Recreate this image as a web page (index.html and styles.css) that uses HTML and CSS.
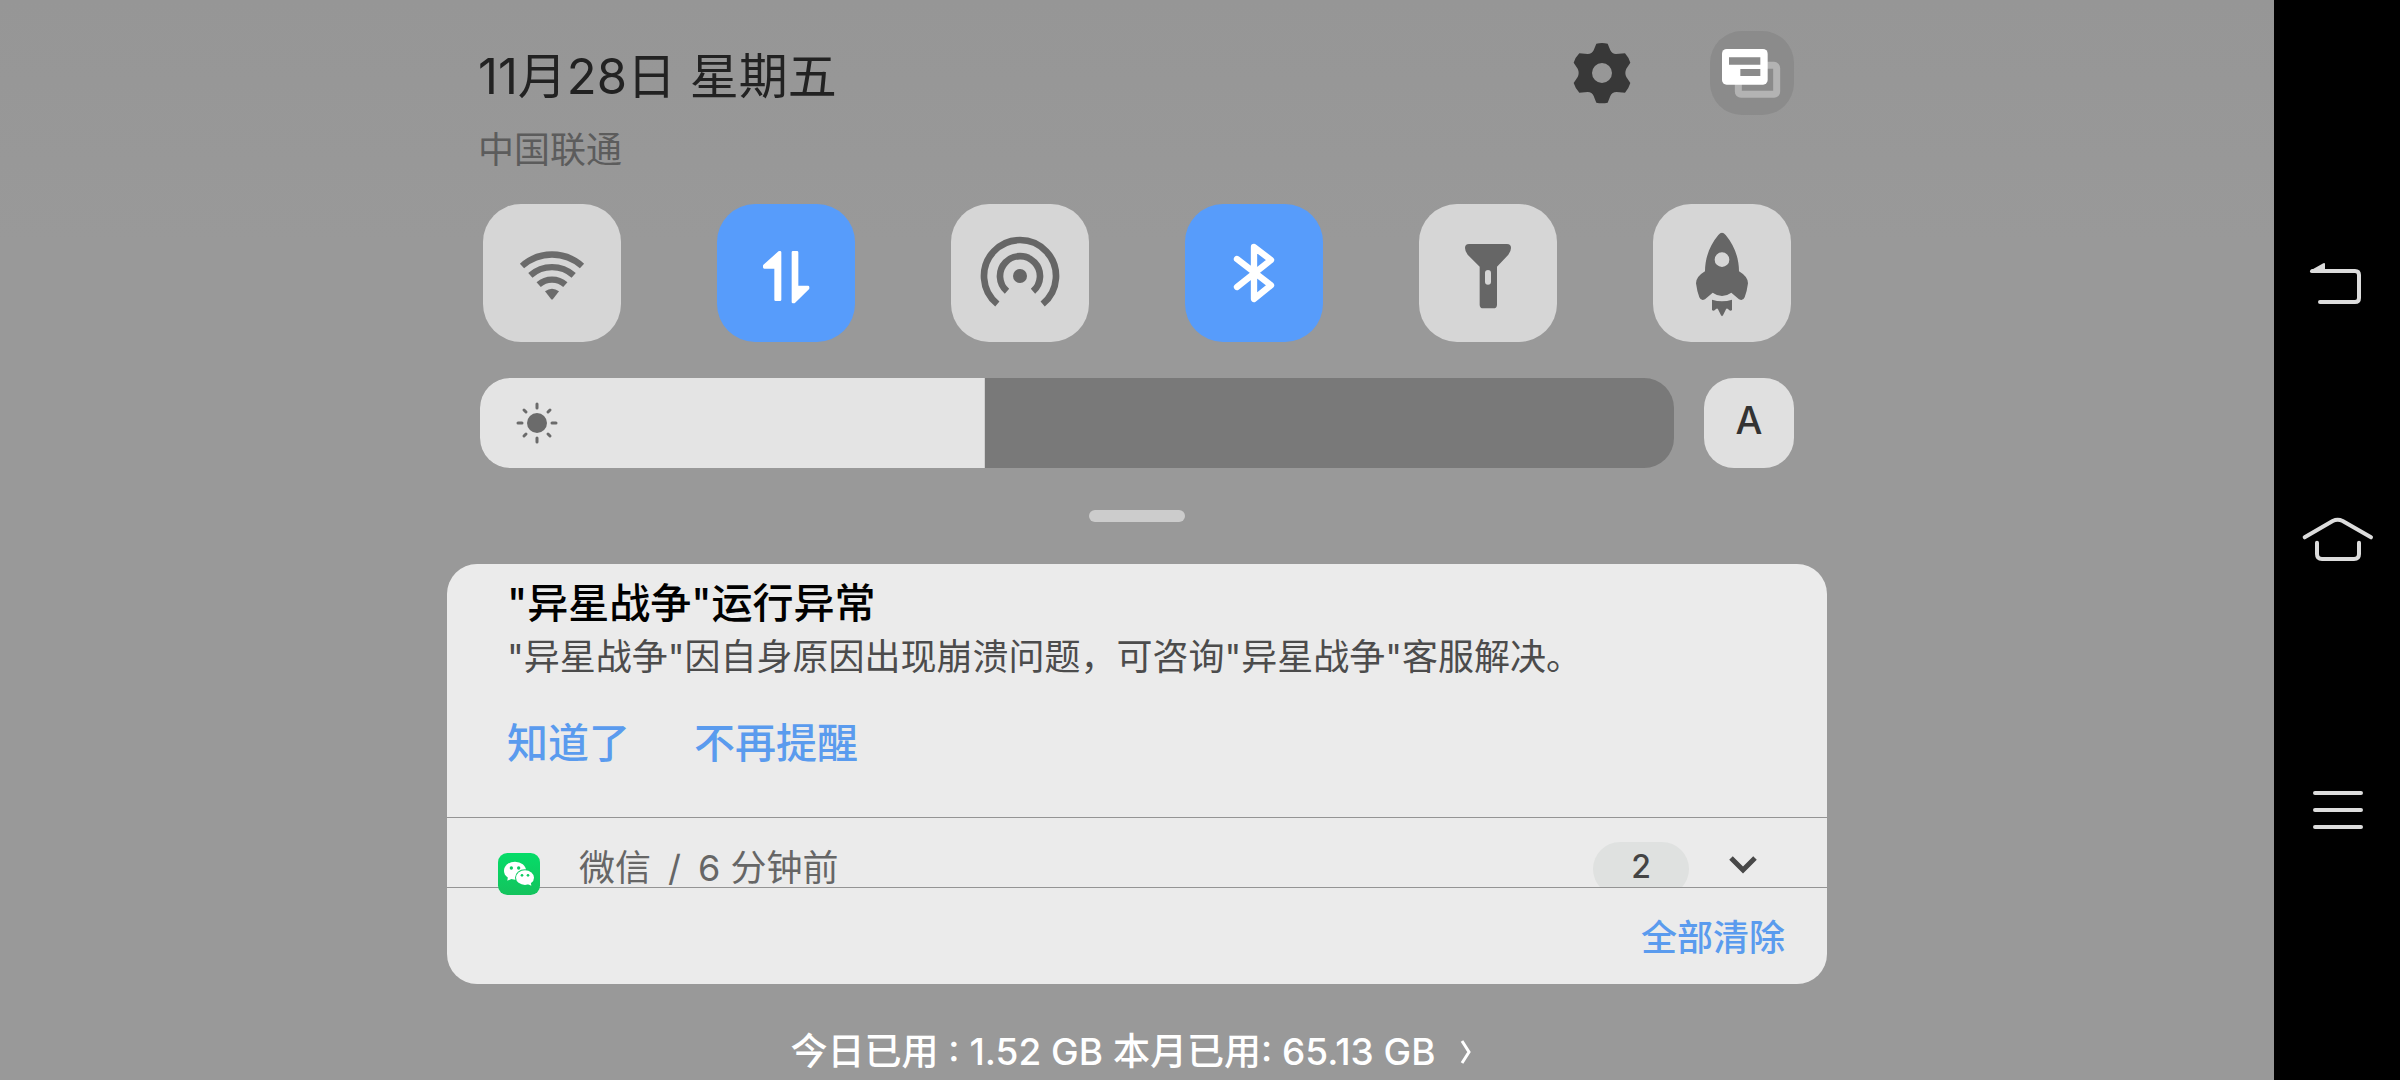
FILE: index.html
```html
<!DOCTYPE html>
<html lang="zh-CN">
<head>
<meta charset="utf-8">
<meta name="viewport" content="width=device-width, initial-scale=1">
<title>通知中心</title>
<link rel="stylesheet" href="styles.css">
</head>
<body>
<div class="screen">
  <main class="shade">
    <section class="quick">
      <header class="header">
        <div class="header-text">
          <h1 class="date">11月28日 星期五</h1>
          <p class="carrier">中国联通</p>
        </div>
        <div class="header-actions">
          <button class="icon-button" type="button" aria-label="设置">
            <svg class="header-icon" viewBox="120 63 252 252">
              <path class="gear" fill-rule="evenodd" d="M229 101Q246 97 263 101L271 121Q276 132 288 132L315 130Q326 142 331 158L319 176Q313 189 319 201L331 219Q326 236 315 248L290 246Q276 246 271 258L263 278Q246 281 229 278L221 258Q216 246 203 246L178 248Q166 236 161 219L173 201Q179 189 173 176L161 158Q166 142 178 130L203 132Q216 132 221 121ZM246 159a30 30 0 1 0 0 60a30 30 0 1 0 0-60Z"/>
            </svg>
          </button>
          <button class="icon-button panel-toggle" type="button" aria-label="切换面板">
            <svg class="header-icon" viewBox="0 0 252 252">
              <rect x="85" y="103" width="115" height="87" rx="8" fill="none" stroke="#b3b3b3" stroke-width="21"/>
              <rect x="36" y="54" width="137" height="107" rx="14" fill="#fff"/>
              <path d="M57 79h94v22H57zM91 114h60v21H91z" fill="#8b8b8b"/>
            </svg>
          </button>
        </div>
      </header>

      <div class="tiles">
        <button class="tile" type="button" aria-label="无线网络" aria-pressed="false">
          <svg viewBox="0 0 414 414">
            <g fill="none" stroke="#6b6b6b" stroke-width="19">
              <path d="M117 186A135 135 0 0 1 297 186"/>
              <path d="M142 214A98 98 0 0 1 272 214"/>
              <path d="M167 242A60 60 0 0 1 247 242"/>
            </g>
            <path d="M186 262Q207 247 228 262L210 285Q207 288 204 285Z" fill="#6b6b6b"/>
          </svg>
        </button>
        <button class="tile tile-on" type="button" aria-label="移动数据" aria-pressed="true">
          <svg viewBox="0 0 414 414">
            <g fill="#fff" stroke="#fff" stroke-width="8" stroke-linejoin="round">
              <path d="M187 145H189V287H176V190H142V185Z"/>
              <path d="M228 145H240V249H273V253L231 294H228Z"/>
            </g>
          </svg>
        </button>
        <button class="tile" type="button" aria-label="个人热点" aria-pressed="false">
          <svg viewBox="0 0 414 414">
            <circle cx="207" cy="216" r="21" fill="#666"/>
            <g fill="none" stroke="#666" stroke-width="20">
              <path d="M168 262A60 60 0 1 1 246 262"/>
              <path d="M139 300A108 108 0 1 1 275 300"/>
            </g>
          </svg>
        </button>
        <button class="tile tile-on" type="button" aria-label="蓝牙" aria-pressed="true">
          <svg viewBox="0 0 414 414">
            <path d="M156 165L258 244L207 285V129L258 168L156 249" fill="none" stroke="#fff" stroke-width="19" stroke-linecap="round" stroke-linejoin="round"/>
          </svg>
        </button>
        <button class="tile" type="button" aria-label="手电筒" aria-pressed="false">
          <svg viewBox="0 0 414 414">
            <path fill="#666" fill-rule="evenodd" d="M150 120H264Q276 120 276 132Q276 142 268 152L234 188V302Q234 313 223 313H193Q182 313 182 302V188L146 152Q138 142 138 132Q138 120 150 120ZM198 207V233a9 9 0 0 0 18 0V207a9 9 0 0 0-18 0Z"/>
          </svg>
        </button>
        <button class="tile" type="button" aria-label="一键加速" aria-pressed="false">
          <svg viewBox="0 0 414 414">
            <path fill="#666" fill-rule="evenodd" d="M207 86Q212 86 218 93C246 127 258 165 258 202Q285 218 285 238Q282 262 275 280Q270 292 258 286L235 266Q207 286 179 266L156 286Q144 292 139 280Q132 262 129 238Q129 218 156 202C156 165 168 127 196 93Q202 86 207 86ZM207 145a22 22 0 1 0 0 44a22 22 0 1 0 0-44Z"/>
            <path fill="#666" d="M177 287Q207 296 237 287V318Q232 324 225 315Q221 312 219 316L210 334Q207 339 204 334L195 316Q193 312 189 315Q182 324 177 318Z"/>
          </svg>
        </button>
      </div>

      <div class="brightness">
        <div class="slider">
          <input class="slider-input" type="range" min="0" max="1194" value="504" aria-label="亮度">
          <svg class="sun" viewBox="0 0 42 42">
            <circle cx="21" cy="21" r="10" fill="#6b6b6b"/>
            <path d="M21 2v4M21 36v4M2 21h4M36 21h4M8 8l2 2M32 32l2 2M8 34l2-2M32 10l2-2" stroke="#6b6b6b" stroke-width="3" stroke-linecap="round"/>
          </svg>
        </div>
        <button class="auto-button" type="button" aria-label="自动亮度">A</button>
      </div>
    </section>

    <button class="handle" type="button" aria-label="展开面板"></button>

    <section class="card">
      <article class="notice">
        <h2 class="notice-title">"异星战争"运行异常</h2>
        <p class="notice-body">"异星战争"因自身原因出现崩溃问题，可咨询"异星战争"客服解决。</p>
        <div class="notice-actions">
          <button class="text-button" type="button">知道了</button>
          <button class="text-button" type="button">不再提醒</button>
        </div>
      </article>
      <article class="group">
        <svg class="app-icon" viewBox="0 0 126 126" role="img" aria-label="微信">
          <defs>
            <linearGradient id="app-green" x2="0" y2="1">
              <stop stop-color="#05dc68"/>
              <stop offset="1" stop-color="#14c35d"/>
            </linearGradient>
          </defs>
          <rect width="126" height="126" rx="28" fill="url(#app-green)"/>
          <path d="M30 70L28 83L42 77Z" fill="#fff"/>
          <ellipse cx="51" cy="53" rx="33" ry="27" fill="#fff"/>
          <ellipse cx="81" cy="74" rx="30" ry="25" fill="#0ccd62"/>
          <ellipse cx="81" cy="74" rx="27" ry="22" fill="#fff"/>
          <path d="M87 92L100 98L98 86Z" fill="#fff"/>
          <g fill="#0ccd62">
            <circle cx="40" cy="45" r="5"/><circle cx="62" cy="45" r="5"/>
            <circle cx="72" cy="67" r="4"/><circle cx="90" cy="67" r="4"/>
          </g>
        </svg>
        <p class="group-title"><span>微信</span><span>/</span><span>6 分钟前</span></p>
        <button class="expand" type="button" aria-label="展开 2 条通知">
          <span class="badge">2</span>
          <svg class="chevron" viewBox="0 0 30 18">
            <path d="M3 2L15 14L27 2" fill="none" stroke="#484848" stroke-width="5"/>
          </svg>
        </button>
      </article>
      <footer class="card-footer">
        <button class="clear-button" type="button">全部清除</button>
      </footer>
    </section>

    <a class="usage" href="#usage">
      <span>今日已用 : 1.52 GB 本月已用: 65.13 GB</span>
      <svg class="usage-arrow" viewBox="0 0 12 24">
        <path d="M2 1L9 12L2 23" fill="none" stroke="#fff" stroke-width="3"/>
      </svg>
    </a>
  </main>

  <nav class="navbar" aria-label="系统导航">
    <button class="nav-button" type="button" aria-label="返回">
      <svg viewBox="0 0 252 252">
        <path d="M52 111H180Q192 111 192 123V192Q192 204 180 204H75"/>
        <path class="nav-solid" d="M45 110L85 88Q90 85 90 91V116H48Q43 114 45 110Z"/>
      </svg>
    </button>
    <button class="nav-button" type="button" aria-label="主屏幕">
      <svg viewBox="0 0 252 252">
        <path d="M29 118L113 69Q128 62 143 69L228 118"/>
        <path d="M66 134V168Q66 183 81 183H177Q192 183 192 168V134"/>
      </svg>
    </button>
    <button class="nav-button" type="button" aria-label="最近任务">
      <svg viewBox="0 0 252 252">
        <path d="M60 93H198M60 144H198M60 195H198"/>
      </svg>
    </button>
  </nav>
</div>
</body>
</html>
```

FILE: styles.css
```css
* {
  box-sizing: border-box;
}

body,
h1,
h2,
p {
  margin: 0;
}

body {
  background: #989898;
  color: #222;
  font-family: Inter, "Noto Sans CJK SC", sans-serif;
}

button {
  padding: 0;
  border: 0;
  background: none;
  color: inherit;
  font: inherit;
  cursor: pointer;
}

svg {
  display: block;
}

.screen {
  display: grid;
  grid-template-columns: minmax(0, 1fr) 126px;
  min-height: 100vh;
}

.shade {
  display: flex;
  flex-direction: column;
  align-items: center;
  background: linear-gradient(#969696, #999 240px);
}

/* Quick settings */

.quick {
  width: 100%;
  max-width: 1314px;
}

.header {
  display: flex;
  justify-content: space-between;
  padding-top: 31px;
  height: 204px;
}

.header-text {
  margin-left: -2px;
  padding-top: 14px;
}

.date {
  font-size: 49px;
  font-weight: 400;
  line-height: 64px;
}

.carrier {
  margin-top: 17px;
  color: #5c5c5c;
  font-size: 36px;
  line-height: 48px;
}

.header-actions {
  display: flex;
  gap: 66px;
  height: 84px;
}

.icon-button {
  width: 84px;
  height: 84px;
  border-radius: 32px;
}

.panel-toggle {
  background: #8b8b8b;
}

.header-icon {
  width: 84px;
  height: 84px;
}

.gear {
  fill: #383838;
}

.tiles {
  display: flex;
  justify-content: space-between;
  padding: 0 3px;
}

.tile {
  width: 138px;
  height: 138px;
  border-radius: 38px;
  background: #d6d6d6;
}

.tile-on {
  background: #579cfb;
}

.brightness {
  display: flex;
  gap: 30px;
  margin-top: 36px;
}

.slider {
  position: relative;
  flex: 1;
  height: 90px;
}

.slider-input {
  display: block;
  width: 100%;
  height: 90px;
  margin: 0;
  border-radius: 30px;
  overflow: hidden;
  background: #797979;
  appearance: none;
}

.slider-input::-webkit-slider-thumb {
  width: 1px;
  height: 90px;
  background: #e4e4e4;
  box-shadow: -1000px 0 0 1000px #e4e4e4;
  clip-path: inset(0 0 0 -2000px);
  appearance: none;
}

.sun {
  position: absolute;
  top: 24px;
  left: 36px;
  width: 42px;
  height: 42px;
  pointer-events: none;
}

.auto-button {
  width: 90px;
  height: 90px;
  padding-bottom: 6px;
  border-radius: 30px;
  background: #e0e0e0;
  color: #333;
  font-size: 38px;
  font-weight: 500;
  line-height: 84px;
}

.handle {
  width: 96px;
  height: 12px;
  margin-top: 42px;
  border-radius: 6px;
  background: #ccc;
}

/* Notifications */

.card {
  width: 100%;
  max-width: 1380px;
  margin-top: 42px;
  border-radius: 30px;
  background: #ebebeb;
}

.notice {
  height: 253px;
  padding: 9px 60px 0;
}

.notice-title {
  color: #000;
  font-size: 41px;
  font-weight: 500;
  line-height: 60px;
}

.notice-body {
  color: #4c4c4c;
  font-size: 36px;
  line-height: 48px;
}

.notice-actions {
  display: flex;
  gap: 64px;
  margin-top: 32px;
}

.text-button,
.clear-button {
  color: #5a9bee;
  font-weight: 500;
}

.text-button {
  font-size: 41px;
  line-height: 60px;
}

.group {
  position: relative;
  z-index: 1;
  display: flex;
  align-items: flex-start;
  height: 70px;
  padding: 0 69px 0 51px;
  border-top: 1px solid #949494;
}

.app-icon {
  width: 42px;
  height: 42px;
  margin-top: 35px;
}

.group-title {
  display: flex;
  gap: 17px;
  margin: 26px auto 0 39px;
  color: #666;
  font-size: 36px;
  line-height: 48px;
}

.expand {
  display: flex;
  align-items: flex-start;
  gap: 39px;
  height: 69px;
  padding-top: 24px;
  overflow: hidden;
}

.badge {
  width: 96px;
  height: 54px;
  border-radius: 27px;
  background: #dfe1e0;
  color: #444;
  font-size: 32px;
  font-weight: 500;
  line-height: 50px;
}

.chevron {
  width: 30px;
  height: 18px;
  margin-top: 14px;
}

.card-footer {
  display: flex;
  justify-content: flex-end;
  height: 97px;
  padding: 26px 42px 0;
  border-top: 1px solid #949494;
}

.clear-button {
  height: 48px;
  font-size: 36px;
  line-height: 48px;
}

.usage {
  display: flex;
  align-items: center;
  gap: 24px;
  margin-top: 44px;
  padding-right: 12px;
  color: #fff;
  font-size: 37px;
  font-weight: 500;
  line-height: 48px;
  text-decoration: none;
}

.usage-arrow {
  width: 12px;
  height: 24px;
}

/* System navigation */

.navbar {
  display: flex;
  flex-direction: column;
  align-items: center;
  justify-content: center;
  gap: 180px;
  background: #000;
}

.nav-button,
.nav-button svg {
  width: 84px;
  height: 84px;
}

.nav-button path {
  fill: none;
  stroke: #dcdcdc;
  stroke-width: 12px;
  stroke-linecap: round;
  stroke-linejoin: round;
}

.nav-button .nav-solid {
  fill: #dcdcdc;
  stroke: none;
}
```
